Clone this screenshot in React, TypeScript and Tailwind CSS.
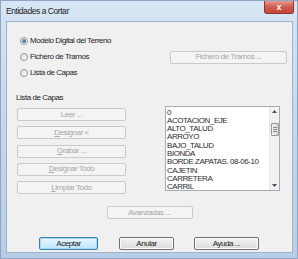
import React from "react";

const font = { fontFamily: '"Liberation Sans", Arial, sans-serif' };

function Radio({ checked }: { checked?: boolean }) {
  return (
    <span className="w-[8px] h-[8px] rounded-full border border-[#9a9a9a] bg-gradient-to-br from-[#dcdcdc] to-[#fbfbfb] flex items-center justify-center shrink-0">
      {checked && <span className="w-[4px] h-[4px] rounded-full bg-gradient-to-br from-[#7fb0d8] to-[#1f5a8a]" />}
    </span>
  );
}

function DisBtn({ children, className = "" }: { children: React.ReactNode; className?: string }) {
  return (
    <div
      className={
        "h-[13px] border border-[#c9c9c9] rounded-[2px] bg-[#f4f4f4] text-[#a7a7a7] text-[8px] tracking-[-0.45px] leading-none flex items-center justify-center " +
        className
      }
    >
      {children}
    </div>
  );
}

function Btn({ children, className = "", def }: { children: React.ReactNode; className?: string; def?: boolean }) {
  return (
    <div
      className={
        "h-[13px] rounded-[2px] border text-[8px] tracking-[-0.45px] leading-none flex items-center justify-center text-[#1a1a1a] " +
        (def
          ? "border-[#3c7fb1] bg-gradient-to-b from-[#eaf6fd] to-[#bee6fd] shadow-[inset_0_0_0_1px_#a7d9f5] "
          : "border-[#707070] bg-gradient-to-b from-[#f3f3f3] to-[#dcdcdc] shadow-[inset_0_0_0_1px_#fcfcfc] ") +
        className
      }
    >
      {children}
    </div>
  );
}

const items = [
  "0",
  "ACOTACION_EJE",
  "ALTO_TALUD",
  "ARROYO",
  "BAJO_TALUD",
  "BIONDA",
  "BORDE ZAPATAS. 08-06-10",
  "CAJETIN",
  "CARRETERA",
  "CARRIL",
];

export default function App() {
  return (
    <div
      style={font}
      className="w-[298px] h-[259px] bg-gradient-to-b from-[#d7e5f4] via-[#c3d7ed] to-[#b8cee8] border border-[#8ea6c2] flex flex-col overflow-hidden"
    >
      <div className="h-[20px] flex justify-between pl-[5px]">
        <span className="text-[8.5px] tracking-[-0.45px] text-[#1e1e1e] self-center leading-none">Entidades a Cortar</span>
        <div className="w-[30px] h-[13px] mr-[3px] rounded-b-[3px] border border-t-0 border-[#8a3a33] bg-gradient-to-b from-[#e59a8e] via-[#cf5a4c] to-[#c74536] flex items-center justify-center">
          <span className="text-white text-[9px] font-bold leading-none">x</span>
        </div>
      </div>
      <div className="ml-[5px] mr-[4px] h-[232px] border border-[#9fb3c9] bg-[#f0f0f0] flex flex-col text-[#1e1e1e]">
        <div className="pt-[13px] flex flex-col">
          <div className="h-[12px] mb-[4px] flex items-center pl-[13px] gap-[2px]">
            <Radio checked />
            <span className="text-[8px] tracking-[-0.45px] leading-none">Modelo Digital del Terreno</span>
          </div>
          <div className="h-[12px] mb-[4px] flex items-center justify-between pl-[13px] pr-[5px]">
            <div className="flex items-center gap-[2px]">
              <Radio />
              <span className="text-[8px] tracking-[-0.45px] leading-none">Fichero de Tramos</span>
            </div>
            <DisBtn className="w-[117px]">Fichero de Tramos ...</DisBtn>
          </div>
          <div className="h-[12px] flex items-center pl-[13px] gap-[2px]">
            <Radio />
            <span className="text-[8px] tracking-[-0.45px] leading-none">Lista de Capas</span>
          </div>
        </div>
        <div className="mt-[14px] pl-[9px] h-[10px] flex items-center text-[8px] tracking-[-0.45px] leading-none">
          Lista de Capas
        </div>
        <div className="mt-[3px] flex items-start">
          <div className="ml-[10px] mt-[2px] w-[109px] flex flex-col gap-[5.25px]">
            <DisBtn>Leer ...</DisBtn>
            <DisBtn>
              <span className="underline">D</span>esignar &lt;
            </DisBtn>
            <DisBtn>
              <span className="underline">G</span>rabar ...
            </DisBtn>
            <DisBtn>
              <span className="underline">D</span>esignar Todo
            </DisBtn>
            <DisBtn>
              <span className="underline">L</span>impiar Todo
            </DisBtn>
          </div>
          <div className="ml-[39px] w-[115px] h-[85px] border border-[#a5acb5] bg-white flex">
            <div className="flex-1 pt-[1.5px] pl-[1px] flex flex-col overflow-hidden">
              {items.map((t) => (
                <div key={t} className="h-[8.3px] shrink-0 text-[8px] tracking-[-0.45px] leading-[8.3px] text-[#2e2e2e] whitespace-nowrap">
                  {t}
                </div>
              ))}
            </div>
            <div className="w-[10px] bg-[#f2f2f2] border-l border-[#e6e6e6] flex flex-col items-center">
              <div className="h-[9px] flex items-center justify-center">
                <svg width="5" height="3" viewBox="0 0 5 3">
                  <path d="M0 3 L2.5 0 L5 3 Z" fill="#4d4d4d" />
                </svg>
              </div>
              <div className="mt-[7px] w-[8px] h-[13px] border border-[#979797] rounded-[1px] bg-gradient-to-r from-[#f1f1f1] to-[#d6d6d6] flex flex-col items-center justify-center gap-[1px]">
                <span className="w-[4px] h-px bg-[#8a8a8a]" />
                <span className="w-[4px] h-px bg-[#8a8a8a]" />
                <span className="w-[4px] h-px bg-[#8a8a8a]" />
              </div>
              <div className="flex-1" />
              <div className="h-[9px] flex items-center justify-center">
                <svg width="5" height="3" viewBox="0 0 5 3">
                  <path d="M0 0 L2.5 3 L5 0 Z" fill="#4d4d4d" />
                </svg>
              </div>
            </div>
          </div>
        </div>
        <div className="mt-[12px] flex justify-center">
          <DisBtn className="w-[86px] h-[12px]">Avanzadas ...</DisBtn>
        </div>
        <div className="mt-[18px] flex pl-[32px]">
          <Btn def className="w-[59px]">Aceptar</Btn>
          <Btn className="ml-[21px] w-[55px]">Anular</Btn>
          <Btn className="ml-[20px] w-[65px]">Ayuda ...</Btn>
        </div>
      </div>
    </div>
  );
}
